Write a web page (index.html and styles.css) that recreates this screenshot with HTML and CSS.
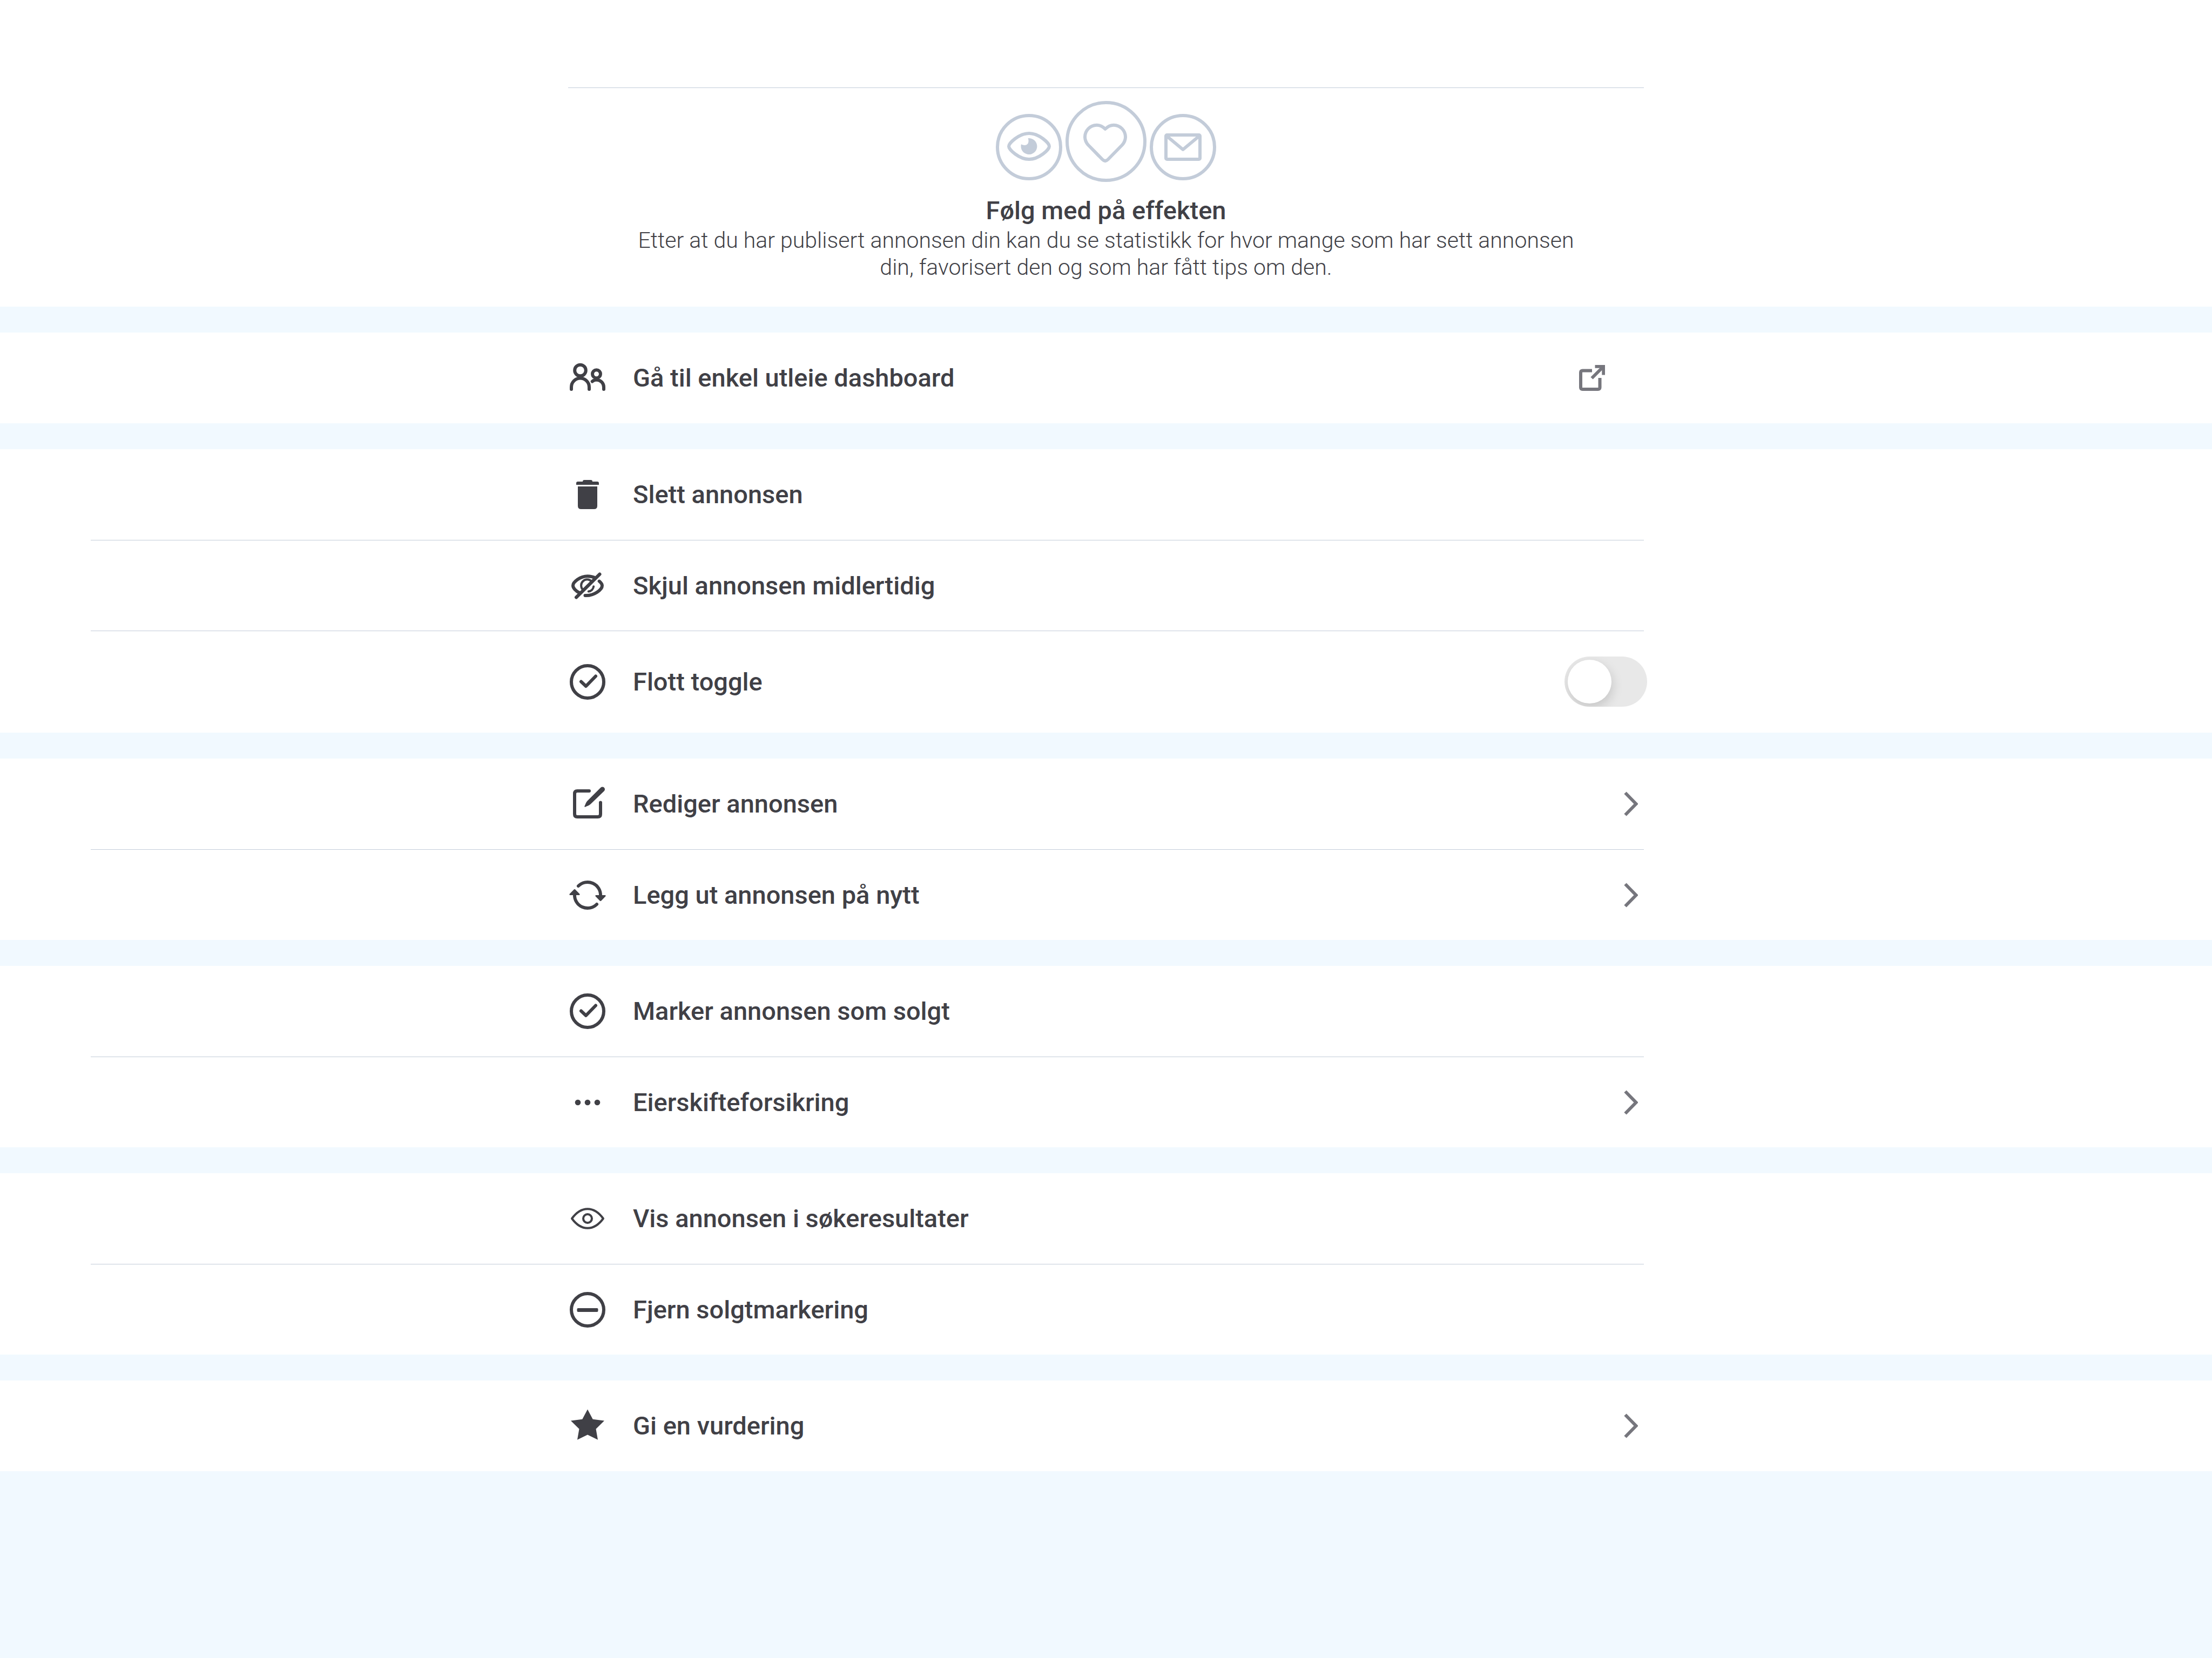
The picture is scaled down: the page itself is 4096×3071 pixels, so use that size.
FILE: index.html
```html
<!DOCTYPE html>
<html lang="nb">
<head>
<meta charset="utf-8">
<meta name="viewport" content="width=device-width, initial-scale=1">
<title>Annonse</title>
<link rel="stylesheet" href="styles.css">
</head>
<body>
<main class="page">
  <section class="group effect">
    <div class="effect-inner">
      <svg class="effect-art" viewBox="0 0 408 150" aria-hidden="true">
        <circle cx="61.5" cy="85.5" r="58.5"/>
        <circle cx="204" cy="75" r="72"/>
        <circle cx="346.5" cy="85.5" r="58.5"/>
        <path d="M24 84c0-6 19-24 37.5-24S99 78 99 84s-19 24-37.5 24S24 90 24 84z"/>
        <path class="solid" d="M59.5 69.2A15 15 0 1 1 46.9 80.3Q50 82 53.5 82A7 7 0 0 0 60.5 75Q61 72 59.5 69.2z"/>
        <path d="M202.500 52C198 47.500 192 44.700 186.700 44.700A22 22 0 0 0 165 66.700C165 72 167 77 171 81.500L197.500 108.500Q202.500 113.500 207.500 108.500L234 81.500C238 77 240 72 240 66.700A22 22 0 0 0 218.300 44.700C213 44.700 207 47.500 202.500 52z"/>
        <rect x="315" y="63" width="63" height="45" rx="2"/>
        <path d="M317 65.500L346.500 90L376 65.500"/>
      </svg>
      <h1 class="effect-title">Følg med på effekten</h1>
      <p class="effect-text">Etter at du har publisert annonsen din kan du se statistikk for hvor mange som har sett annonsen din, favorisert den og som har fått tips om den.</p>
    </div>
  </section>

  <ul class="group">
    <li class="item"><a class="row" href="#dashboard">
      <svg class="icon" viewBox="0 0 72 72" aria-hidden="true"><circle cx="22.500" cy="22" r="10.300"/><path d="M6 57v-4a16.500 16.500 0 0 1 33 0v4M44.700 42.500c2.300-2 5-3 8.300-3a13.500 13.500 0 0 1 13 13.500v4"/><circle cx="52.500" cy="28.700" r="7.500"/></svg>
      <span class="label">Gå til enkel utleie dashboard</span>
      <svg class="external" viewBox="0 0 48 48" aria-hidden="true"><path d="M24 10.500H6.500Q3 10.500 3 14v27.500Q3 45 6.500 45H35q3.500 0 3.500-3.500V24"/><path d="M23.500 24.500L44 4" /><path d="M29.500 2.700H45.300V18.500"/></svg>
    </a></li>
  </ul>

  <ul class="group">
    <li class="item"><button class="row" type="button">
      <svg class="icon" viewBox="0 0 72 72" aria-hidden="true"><path class="solid" d="M15 18v-3q0-3 3-3h9q0-3 3-3h12q3 0 3 3h9q3 0 3 3v3zM18 21h36v36q0 6-6 6H24q-6 0-6-6z"/></svg>
      <span class="label">Slett annonsen</span>
    </button></li>
    <li class="item"><button class="row" type="button">
      <svg class="icon" viewBox="0 0 72 72" aria-hidden="true"><path d="M15 57.500L58.500 14.500M50.500 21.500C46 19.300 41 18.300 36 18.300C22 18.300 9 29 9 35.700C9 40 14 45.500 21 49M57.700 27.600C61 30.500 63 33 63 35.700C63 43 48 55 31.500 54"/><path class="fine" d="M43 27.500A10.300 10.300 0 0 0 27.500 43.500M47.200 37.300C46.500 42 43 46 37.700 46.600"/></svg>
      <span class="label">Skjul annonsen midlertidig</span>
    </button></li>
    <li class="item"><label class="row row-toggle">
      <svg class="icon" viewBox="0 0 72 72" aria-hidden="true"><circle cx="36" cy="36" r="30"/><path d="M24 35.500L33 44L51 25.500"/></svg>
      <span class="label">Flott toggle</span>
      <input class="toggle" type="checkbox" role="switch">
    </label></li>
  </ul>

  <ul class="group">
    <li class="item"><a class="row" href="#rediger">
      <svg class="icon" viewBox="0 0 72 72" aria-hidden="true"><path d="M39 12H17Q12 12 12 17V55Q12 60 17 60H55Q60 60 60 55V33.500"/><path class="solid" d="M60.300 5.800A4.500 4.500 0 0 1 66.700 12.200L41.500 36.500C38.500 39 35 40 31.500 41.700Q30.200 41.800 30.300 40.500C32 37 33 33.500 35.500 30.500z"/></svg>
      <span class="label">Rediger annonsen</span>
      <svg class="chevron" viewBox="0 0 26 46" aria-hidden="true"><path d="M2.500 2.500L22.500 23L2.500 43.500"/></svg>
    </a></li>
    <li class="item"><a class="row" href="#legg-ut">
      <svg class="icon" viewBox="0 0 72 72" aria-hidden="true"><path d="M19 19A24 24 0 0 1 60 37M53 53A24 24 0 0 1 12 35"/><path class="solid" d="M12 25Q13 25 13.700 26L21.500 34Q22 36 20.500 36H3.500Q2 36 2.500 34L10.300 26Q11 25 12 25zM60 47Q59 47 58.300 46L50.500 38Q50 36 51.500 36H68.500Q70 36 69.500 38L61.700 46Q61 47 60 47z"/></svg>
      <span class="label">Legg ut annonsen på nytt</span>
      <svg class="chevron" viewBox="0 0 26 46" aria-hidden="true"><path d="M2.500 2.500L22.500 23L2.500 43.500"/></svg>
    </a></li>
  </ul>

  <ul class="group">
    <li class="item"><button class="row" type="button">
      <svg class="icon" viewBox="0 0 72 72" aria-hidden="true"><circle cx="36" cy="36" r="30"/><path d="M24 35.500L33 44L51 25.500"/></svg>
      <span class="label">Marker annonsen som solgt</span>
    </button></li>
    <li class="item"><a class="row" href="#eierskifte">
      <svg class="icon" viewBox="0 0 72 72" aria-hidden="true"><g class="solid"><circle cx="18" cy="36" r="5.300"/><circle cx="36" cy="36" r="5.300"/><circle cx="54" cy="36" r="5.300"/></g></svg>
      <span class="label">Eierskifteforsikring</span>
      <svg class="chevron" viewBox="0 0 26 46" aria-hidden="true"><path d="M2.500 2.500L22.500 23L2.500 43.500"/></svg>
    </a></li>
  </ul>

  <ul class="group">
    <li class="item"><button class="row" type="button">
      <svg class="icon" viewBox="0 0 72 72" aria-hidden="true"><g class="fine"><path d="M7 36C15 25 24 18.200 36 18.200S57 25 65 36C57 47 48 53.800 36 53.800S15 47 7 36z"/><circle cx="36" cy="36" r="8"/></g></svg>
      <span class="label">Vis annonsen i søkeresultater</span>
    </button></li>
    <li class="item"><button class="row" type="button">
      <svg class="icon" viewBox="0 0 72 72" aria-hidden="true"><circle cx="36" cy="36" r="30"/><rect class="solid" x="16.500" y="33" width="39" height="7" rx="2"/></svg>
      <span class="label">Fjern solgtmarkering</span>
    </button></li>
  </ul>

  <ul class="group">
    <li class="item"><a class="row" href="#vurdering">
      <svg class="icon" viewBox="0 0 72 72" aria-hidden="true"><path class="solid" d="M36 5.500L45.700 23.800L67 26.500L51.500 41.800L55 61.800L36 52.500L17 61.800L20.500 41.800L5 26.500L26.300 23.800z"/></svg>
      <span class="label">Gi en vurdering</span>
      <svg class="chevron" viewBox="0 0 26 46" aria-hidden="true"><path d="M2.500 2.500L22.500 23L2.500 43.500"/></svg>
    </a></li>
  </ul>
</main>
</body>
</html>
```
FILE: styles.css
```css
:root {
  --column: 1992px;
  --ink: #404046;
  --muted: #76767d;
  --line: #c3ccd9;
  --ice: #f1f9ff;
}

* {
  box-sizing: border-box;
}

body {
  margin: 0;
  background: var(--ice);
  color: var(--ink);
  font-family: Roboto, "Liberation Sans", sans-serif;
}

.page {
  display: flex;
  flex-direction: column;
  gap: 48px;
}

.group {
  margin: 0;
  padding: 0;
  background: #fff;
  list-style: none;
}

/* Statistics teaser */
.effect {
  padding: 162px 0 48px;
}

.effect-inner {
  display: flex;
  flex-direction: column;
  align-items: center;
  max-width: var(--column);
  margin: 0 auto;
  padding: 24px 118px 0;
  border-top: 1px solid var(--line);
  text-align: center;
}

.effect-art {
  width: 408px;
  height: 150px;
  fill: none;
  stroke: #c3ccd9;
  stroke-width: 6;
  stroke-linejoin: round;
}

.effect-art .solid {
  fill: #c3ccd9;
  stroke: none;
}

.effect-title {
  margin: 23px 0 0;
  font-size: 47px;
  font-weight: 500;
  line-height: 60px;
}

.effect-text {
  margin: 0;
  font-size: 41px;
  font-weight: 300;
  line-height: 50px;
}

/* Action rows */
.item {
  margin-left: 168px;
  margin-right: calc((100% - var(--column)) / 2);
}

.item + .item {
  border-top: 1px solid var(--line);
}

.item + .item .row {
  min-height: 167px;
}

.row {
  display: flex;
  align-items: center;
  gap: 48px;
  width: 100%;
  max-width: var(--column);
  min-height: 168px;
  margin: 0 0 0 auto;
  padding: 0;
  border: 0;
  background: none;
  color: inherit;
  font: inherit;
  text-align: left;
  text-decoration: none;
  cursor: pointer;
}

.row-toggle {
  padding: 47px 0 48px;
}

.label {
  flex: 1;
  font-size: 47px;
  font-weight: 500;
  line-height: 60px;
}

.icon {
  width: 72px;
  height: 72px;
  fill: none;
  stroke: var(--ink);
  stroke-width: 6;
  stroke-linecap: round;
  stroke-linejoin: round;
}

.icon .solid {
  fill: var(--ink);
  stroke: none;
}

.icon .fine {
  stroke-width: 4;
}

.chevron {
  width: 26px;
  height: 46px;
  margin-right: 11px;
  fill: none;
  stroke: var(--muted);
  stroke-width: 6;
}

.external {
  width: 48px;
  height: 48px;
  margin-right: 72px;
  fill: none;
  stroke: var(--muted);
  stroke-width: 6;
}

.toggle {
  appearance: none;
  width: 153px;
  height: 93px;
  margin: 0 -6px 0 0;
  padding: 6px;
  overflow: hidden;
  border-radius: 47px;
  background: #e8e8e8;
  cursor: pointer;
}

.toggle::before {
  content: "";
  display: block;
  width: 81px;
  height: 81px;
  border-radius: 50%;
  background: #fff;
  box-shadow: 2px 8px 20px rgba(0, 0, 0, 0.15);
}

.toggle:checked::before {
  margin-left: auto;
}
```
